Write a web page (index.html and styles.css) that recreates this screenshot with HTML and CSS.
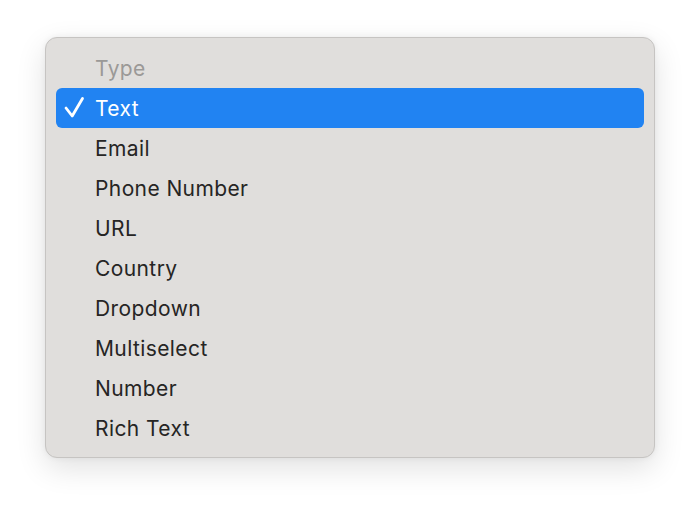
FILE: index.html
```html
<!DOCTYPE html>
<html>
<head>
<meta charset="utf-8">
<link rel="stylesheet" href="styles.css">
</head>
<body>
<div class="menu">
  <div class="item header">Type</div>
  <div class="item selected">
    <svg class="check" width="22" height="24" viewBox="0 0 22 24"><path d="M2 12 L8.2 20 L18.5 2.5" fill="none" stroke="#fff" stroke-width="2.8" stroke-linecap="round" stroke-linejoin="round"/></svg>
    <span>Text</span>
  </div>
  <div class="item">Email</div>
  <div class="item">Phone Number</div>
  <div class="item">URL</div>
  <div class="item">Country</div>
  <div class="item">Dropdown</div>
  <div class="item">Multiselect</div>
  <div class="item">Number</div>
  <div class="item">Rich Text</div>
</div>
</body>
</html>
```
FILE: styles.css
```css
html, body {
  margin: 0;
  padding: 0;
  background: #ffffff;
}
body {
  width: 700px;
  height: 512px;
  padding: 37px 0 0 45px;
  box-sizing: border-box;
  font-family: Inter, "Noto Sans", sans-serif;
}
.menu {
  width: 610px;
  height: 421px;
  box-sizing: border-box;
  background: #e0dedc;
  border: 1px solid #c6c4c2;
  border-radius: 12px;
  padding: 10px 10px 9px 10px;
  box-shadow: 0 10px 30px rgba(0,0,0,0.12), 0 0 6px rgba(0,0,0,0.06);
}
.item {
  height: 40px;
  display: flex;
  align-items: center;
  padding-left: 39px;
  font-size: 21px;
  color: #262524;
  letter-spacing: 0.4px;
  position: relative;
}
.header {
  color: #9b9997;
}
.selected {
  background: #2183f2;
  color: #ffffff;
  border-radius: 6px;
}
.check {
  position: absolute;
  left: 8px;
  top: 8px;
}
```
